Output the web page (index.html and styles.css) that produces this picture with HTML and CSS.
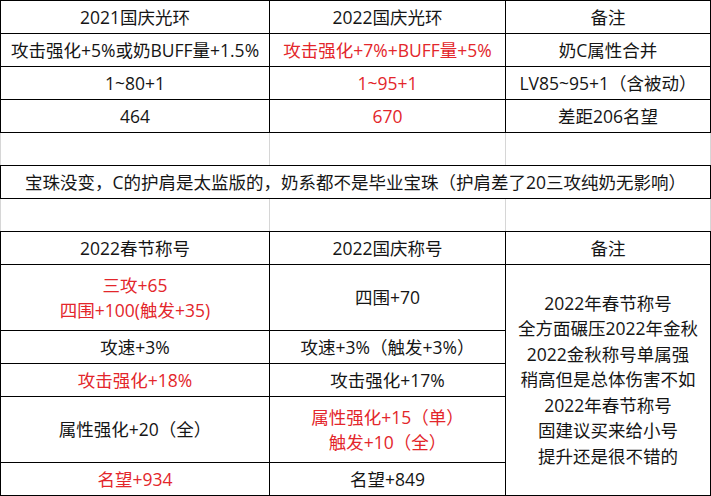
FILE: index.html
```html
<!DOCTYPE html>
<html lang="zh-CN">
<head>
<meta charset="utf-8">
<title>国庆光环与称号对比</title>
<link rel="stylesheet" href="styles.css">
</head>
<body>
<div class="sheet">
  <div class="grid grid-top">
    <div class="cell">2021国庆光环</div>
    <div class="cell">2022国庆光环</div>
    <div class="cell">备注</div>
    <div class="cell">攻击强化+5%或奶BUFF量+1.5%</div>
    <div class="cell red">攻击强化+7%+BUFF量+5%</div>
    <div class="cell">奶C属性合并</div>
    <div class="cell">1~80+1</div>
    <div class="cell red">1~95+1</div>
    <div class="cell">LV85~95+1（含被动）</div>
    <div class="cell">464</div>
    <div class="cell red">670</div>
    <div class="cell">差距206名望</div>
  </div>
  <div class="blank">
    <div class="cell"></div><div class="cell"></div><div class="cell"></div>
  </div>
  <div class="grid grid-note">
    <div class="cell">宝珠没变，C的护肩是太监版的，奶系都不是毕业宝珠（护肩差了20三攻纯奶无影响）</div>
  </div>
  <div class="blank">
    <div class="cell"></div><div class="cell"></div><div class="cell"></div>
  </div>
  <div class="grid grid-bottom">
    <div class="cell">2022春节称号</div>
    <div class="cell">2022国庆称号</div>
    <div class="cell">备注</div>
    <div class="cell red">三攻+65<br>四围+100(触发+35)</div>
    <div class="cell">四围+70</div>
    <div class="cell remark">2022年春节称号<br>全方面碾压2022年金秋<br>2022金秋称号单属强<br>稍高但是总体伤害不如<br>2022年春节称号<br>固建议买来给小号<br>提升还是很不错的</div>
    <div class="cell">攻速+3%</div>
    <div class="cell">攻速+3%（触发+3%）</div>
    <div class="cell red">攻击强化+18%</div>
    <div class="cell">攻击强化+17%</div>
    <div class="cell">属性强化+20（全）</div>
    <div class="cell red">属性强化+15（单）<br>触发+10（全）</div>
    <div class="cell red">名望+934</div>
    <div class="cell">名望+849</div>
  </div>
</div>
</body>
</html>
```
FILE: styles.css
```css
html, body {
  margin: 0;
  padding: 0;
  background: #ffffff;
}
body {
  font-family: "Open Sans", "Noto Sans CJK SC", sans-serif;
  font-size: 17.5px;
  color: #151515;
}
.sheet {
  width: 711px;
}
.grid {
  display: grid;
  grid-template-columns: 268px 235px 204px;
  gap: 1px;
  padding: 1px;
  background: #000000;
}
.grid-top {
  grid-template-rows: repeat(4, 32px);
}
.grid-note {
  grid-template-columns: 1fr;
  grid-template-rows: 32px;
}
.grid-bottom {
  grid-template-rows: 32px 65px 32px 32px 65px 32px;
}
.grid-bottom .remark {
  grid-column: 3;
  grid-row: 2 / 7;
}
.blank {
  display: grid;
  grid-template-columns: 268px 235px 204px;
  grid-template-rows: 32px;
  gap: 1px;
  padding: 0 1px;
  background: #d6d6d6;
}
.cell {
  background: #ffffff;
  display: flex;
  align-items: center;
  justify-content: center;
  text-align: center;
  line-height: 25px;
  white-space: nowrap;
}
.remark {
  line-height: 25.5px;
}
.red {
  color: #e3262b;
}
```
